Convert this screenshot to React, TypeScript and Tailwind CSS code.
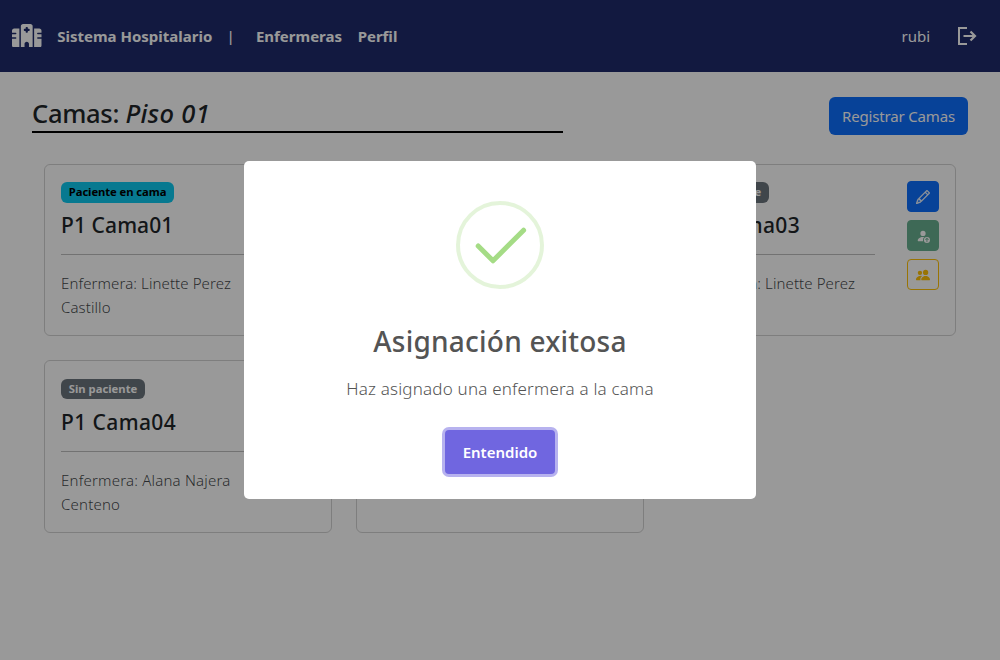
import type { ReactNode } from "react";
import { FaHospital } from "react-icons/fa6";
import { BsPencil, BsPeopleFill, BsPersonFillUp } from "react-icons/bs";

type Bed = { name: string; nurse: string; occupied: boolean };

const beds: Bed[] = [
  { name: "P1 Cama01", nurse: "Linette Perez Castillo", occupied: true },
  { name: "P1 Cama02", nurse: "Alana Najera Centeno", occupied: false },
  { name: "P1 Cama03", nurse: "Linette Perez Castillo", occupied: false },
  { name: "P1 Cama04", nurse: "Alana Najera Centeno", occupied: false },
  { name: "P1 Cama05", nurse: "Sin asignar", occupied: false },
];

function LogoutIcon() {
  return (
    <svg className="h-5 w-5" viewBox="0 0 20 20" fill="none" stroke="currentColor" strokeWidth="2">
      <path d="M10 2H2v16h8" />
      <path d="M6.5 10H18M13.5 5.5 18 10l-4.5 4.5" strokeWidth="2.2" />
    </svg>
  );
}

function Navbar() {
  return (
    <nav className="flex h-[72px] items-center justify-between bg-[#1e2b6b] pr-[23px] pl-3 text-[15px] text-white">
      <div className="flex items-center font-bold">
        <FaHospital className="mb-px h-[23.6px] w-[29.5px]" />
        <span className="ml-[15.7px]">Sistema Hospitalario</span>
        <span className="ml-[14.3px] w-[7px] text-center font-medium">|</span>
        <span className="ml-[22.3px]">Enfermeras</span>
        <span className="ml-[15.6px]">Perfil</span>
      </div>
      <div className="flex items-center gap-[27px]">
        <span>rubi</span>
        <LogoutIcon />
      </div>
    </nav>
  );
}

function ActionButton({ className, children }: { className: string; children: ReactNode }) {
  return (
    <button className={`flex h-[31px] w-8 items-center justify-center rounded border text-sm ${className}`}>
      {children}
    </button>
  );
}

function BedCard({ bed }: { bed: Bed }) {
  return (
    <article className="flex h-[172.25px] justify-between rounded-md border border-black/[0.175] p-4">
      <div className="w-[190px]">
        <span
          className={`mt-[1.3px] block h-[20.5px] w-fit rounded-md px-[7.8px] text-[11.25px] leading-[20.5px] font-bold ${
            bed.occupied ? "bg-[#0dcaf0] tracking-[-0.07px] text-black" : "bg-[#6c757d] text-white"
          }`}
        >
          {bed.occupied ? "Paciente en cama" : "Sin paciente"}
        </span>
        <h5
          className={`mt-[8.5px] text-[21px] leading-7 font-medium ${
            bed.occupied ? "tracking-[0.1px]" : "tracking-[0.4px]"
          }`}
        >
          {bed.name}
        </h5>
        <hr className="mt-[15px] mb-4 border-black/25" />
        <p
          className={`text-[15px] leading-6 font-light text-[#212529]/85 ${
            bed.nurse.startsWith("Alana") ? "tracking-[0.2px]" : "tracking-[0.1px]"
          }`}
        >
          Enfermera: {bed.nurse}
        </p>
      </div>
      <div className="flex flex-col gap-2">
        <ActionButton className="border-[#0d6efd] bg-[#0d6efd] text-white">
          <BsPencil className="stroke-current stroke-[0.5px]" />
        </ActionButton>
        <ActionButton className="border-[#198754] bg-[#198754] text-white opacity-65">
          <BsPersonFillUp />
        </ActionButton>
        <ActionButton className="border-[#ffc107] text-[#ffc107]">
          <BsPeopleFill />
        </ActionButton>
      </div>
    </article>
  );
}

function SuccessDialog() {
  return (
    <div className="fixed inset-0 flex items-center justify-center bg-black/40">
      <div
        role="dialog"
        className="flex h-[338px] w-[512px] flex-col items-center rounded-[5px] bg-white pt-10 text-[#545454]"
      >
        <svg className="h-[88px] w-[88px] shrink-0" viewBox="0 0 88 88" fill="none" stroke="#a5dc86">
          <circle cx="44" cy="44" r="42" strokeWidth="4" strokeOpacity="0.3" />
          <path d="M22.2 45 37 59.8 67.6 29.2" strokeWidth="5" strokeLinecap="round" strokeLinejoin="round" />
        </svg>
        <h2 className="mt-8 text-[28px] leading-[41px] font-medium tracking-[0.22px]">Asignación exitosa</h2>
        <p className="mt-[13px] text-[17px] leading-[27px] font-light tracking-[0.2px]">
          Haz asignado una enfermera a la cama
        </p>
        <button className="mt-7 h-11 w-[110px] rounded bg-[#7066e0] text-[15px] font-semibold text-white shadow-[0_0_0_3px_rgba(112,102,224,0.5)]">
          Entendido
        </button>
      </div>
    </div>
  );
}

export default function App() {
  return (
    <div className="h-[660px] overflow-hidden bg-white font-['Noto_Sans',sans-serif] text-[#212529]">
      <Navbar />
      <main className="px-8 pt-[25px]">
        <header className="flex items-start justify-between">
          <h3 className="h-9 w-[530.7px] border-b-2 border-black text-[25.5px] leading-[33px] font-medium">
            <span className="tracking-[-0.3px]">Camas: </span>
            <em className="tracking-[0.35px]">Piso 01</em>
          </h3>
          <button className="h-[38px] w-[139px] rounded-md bg-[#0d6efd] text-[15px] tracking-[-0.16px] text-white">
            Registrar Camas
          </button>
        </header>
        <section className="mt-[29px] grid grid-cols-3 gap-6 px-3">
          {beds.map((bed) => (
            <BedCard key={bed.name} bed={bed} />
          ))}
        </section>
      </main>
      <SuccessDialog />
    </div>
  );
}
